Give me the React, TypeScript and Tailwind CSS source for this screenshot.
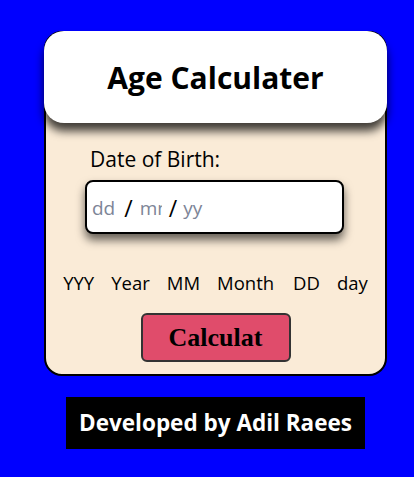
export default function App() {
  return (
    <div className="min-h-[477px] w-[414px] bg-[#0000ff] pt-[31px] font-['Open_Sans',sans-serif]">
      <div className="ml-[44px] flex w-[343px] flex-col items-center">
        {/* card */}
        <div className="flex h-[345px] w-[343px] flex-col items-center rounded-[18px] border-2 border-black bg-[#faebd7]">
          <div className="-mx-[2px] -mt-[2px] flex h-[92px] w-[343px] items-center justify-center rounded-[20px] bg-white shadow-[0_8px_10px_rgba(0,0,0,0.75)]">
            <h1 className="text-[30px] font-bold text-black">Age Calculater</h1>
          </div>

          <div className="mt-[22px] ml-[39px] w-[259px] self-start">
            <p className="pl-[5px] text-[21px] leading-[28px] text-black">Date of Birth:</p>
            <div className="mt-[7px] flex h-[54px] items-center rounded-[8px] border-2 border-black bg-white pt-[3px] pl-[5px] text-[19px] shadow-[0_6px_10px_rgba(0,0,0,0.6)]">
              <span className="text-[#7d8597]">dd</span>
              <span className="ml-[9px] text-[23px] leading-none text-black">/</span>
              <span className="ml-[7px] w-[22px] overflow-hidden whitespace-nowrap text-[#7d8597]">mm</span>
              <span className="ml-[7px] text-[23px] leading-none text-black">/</span>
              <span className="ml-[6px] text-[#7d8597]">yy</span>
            </div>
          </div>

          <div className="mt-[35px] flex gap-[17px] text-[18.5px] text-black">
            <span>YYY</span>
            <span>Year</span>
            <span>MM</span>
            <span className="mr-[2px]">Month</span>
            <span>DD</span>
            <span>day</span>
          </div>

          <button className="mt-[16px] h-[49px] w-[150px] rounded-[6px] border-2 border-[#333] bg-[#e04c6b] font-['Liberation_Serif',serif] text-[26px] font-bold text-black">
            Calculat
          </button>
        </div>

        <div className="mt-[21px] flex h-[52px] w-[299px] items-center justify-center bg-black">
          <p className="text-[22.5px] font-bold text-white">Developed by Adil Raees</p>
        </div>
      </div>
    </div>
  )
}
